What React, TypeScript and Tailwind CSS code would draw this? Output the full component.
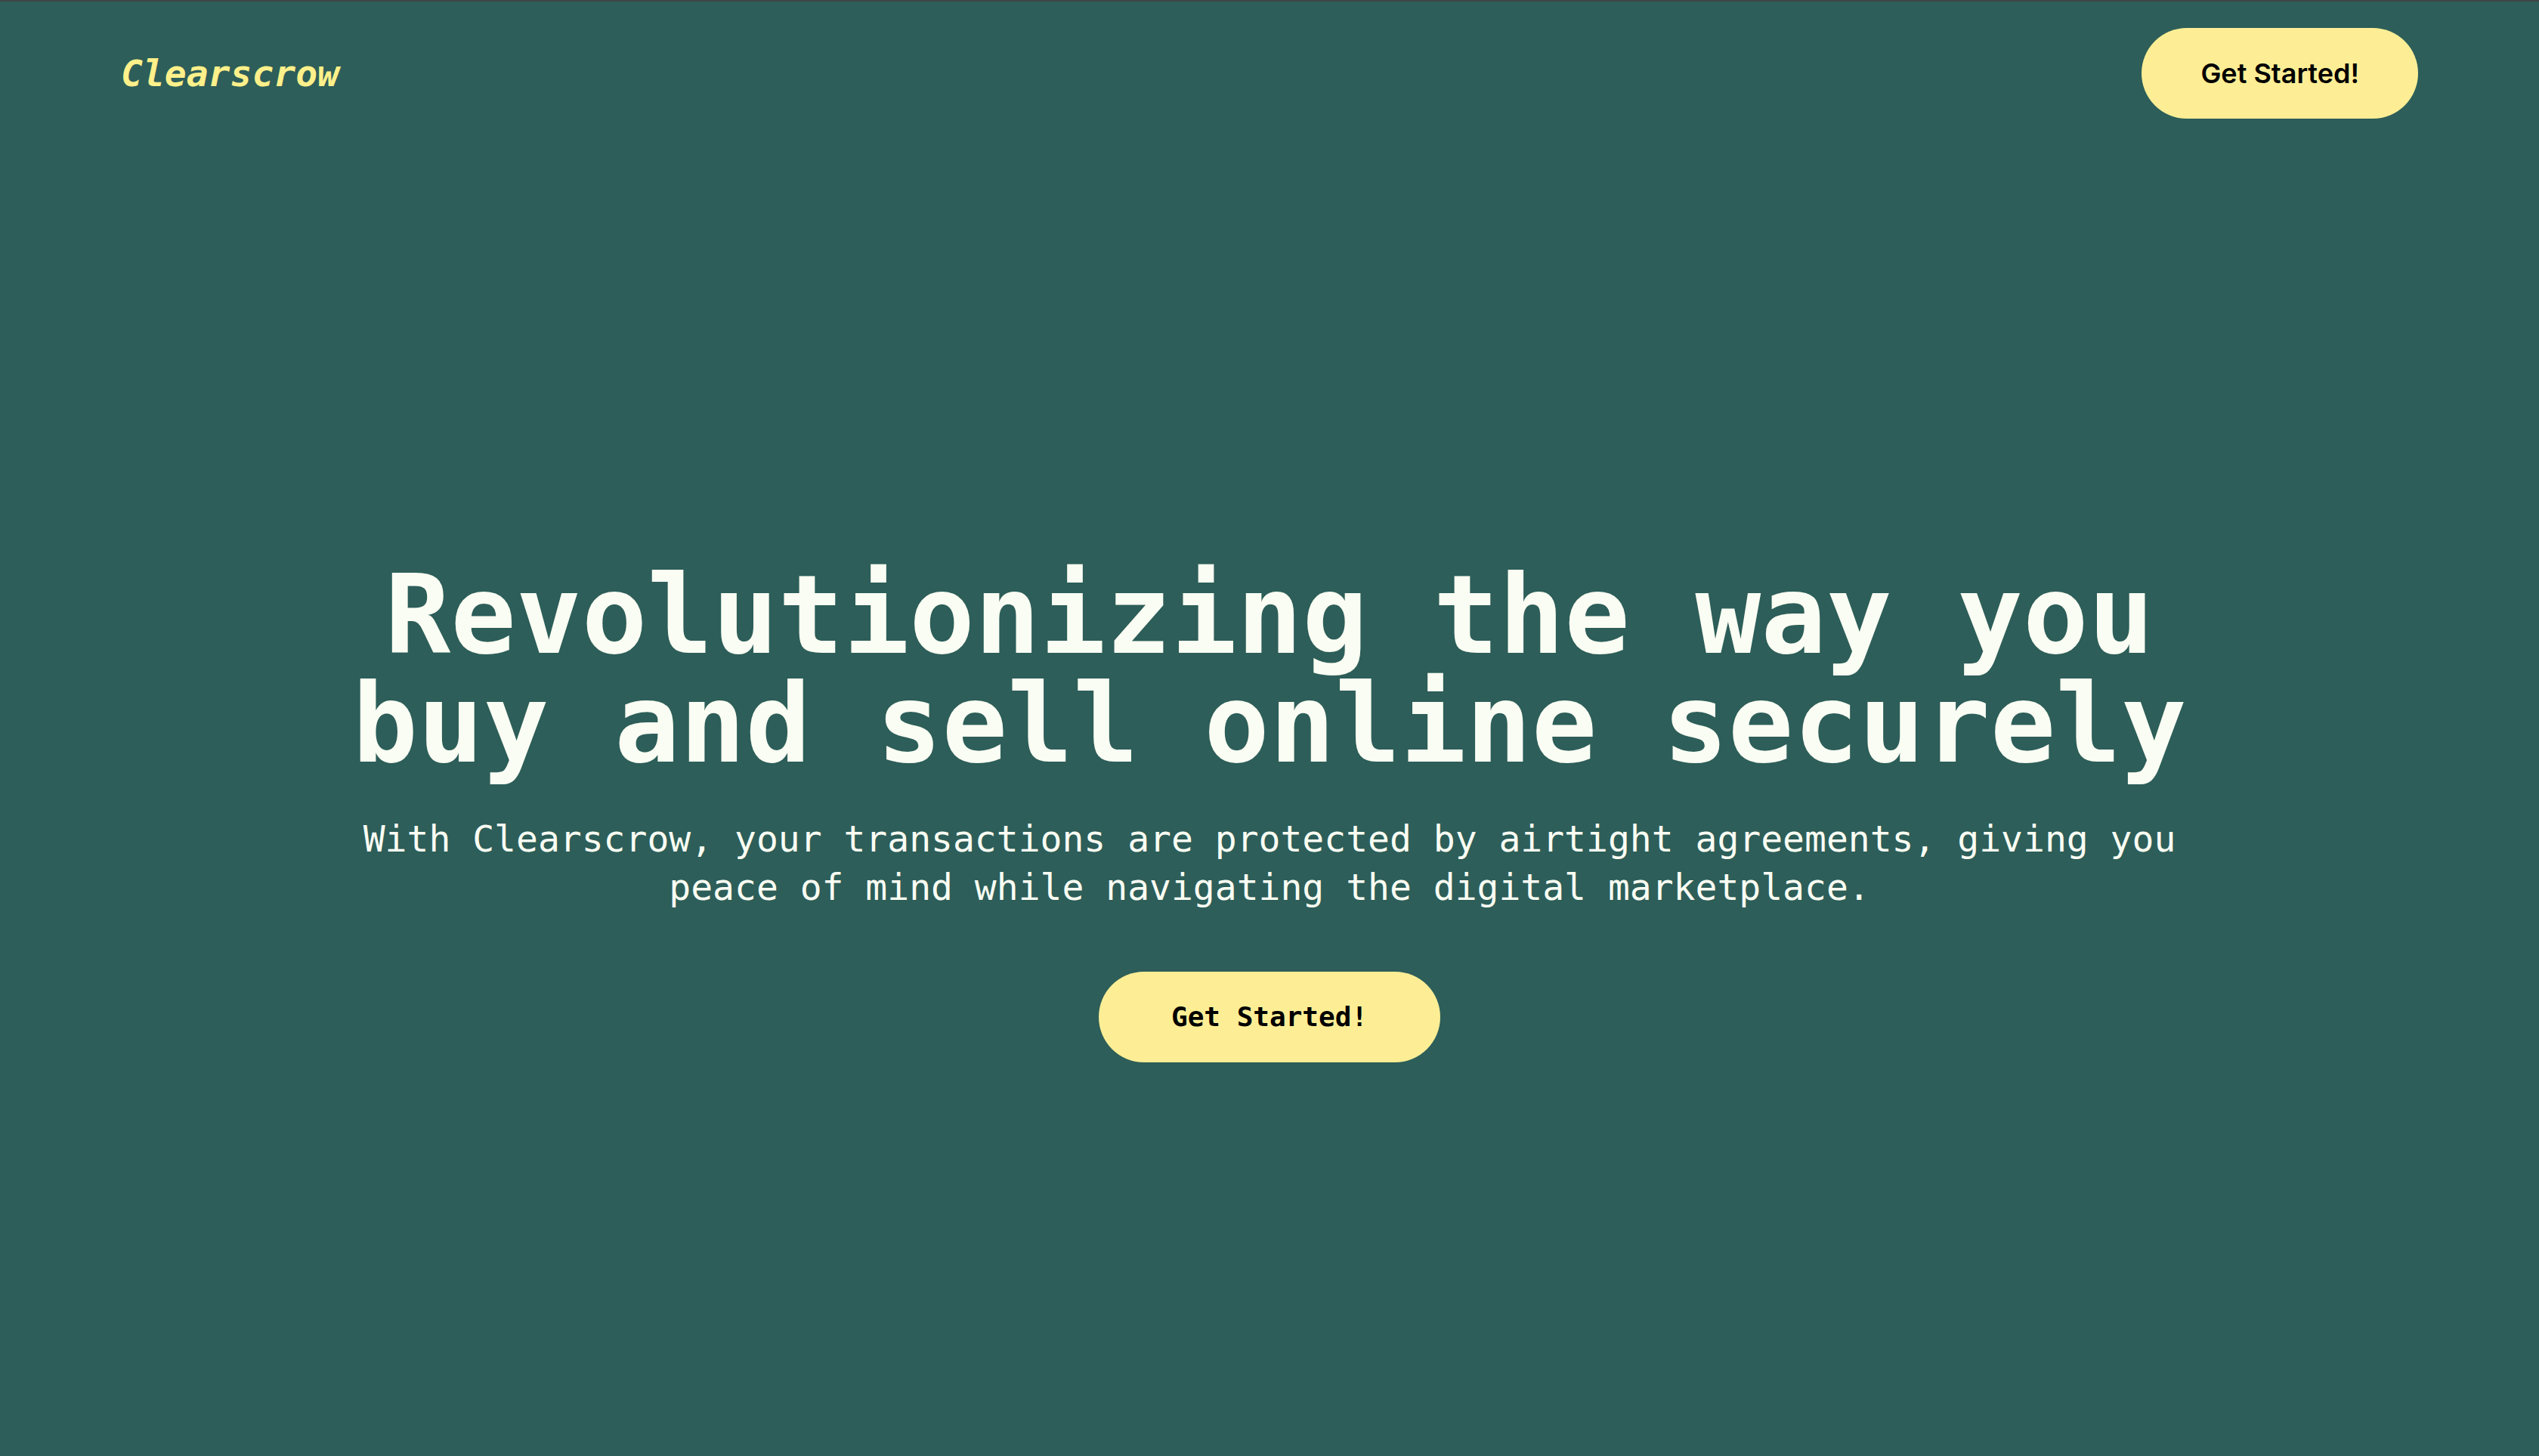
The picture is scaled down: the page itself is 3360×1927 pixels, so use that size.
const MONO = "font-['DejaVu_Sans_Mono','Liberation_Mono',monospace]";

function Header() {
  return (
    <header className="flex items-center justify-between px-[160px] pt-[35px]">
      <a className={`${MONO} text-[48px] font-bold italic leading-none text-[#fef08a]`}>
        Clearscrow
      </a>
      <button className="rounded-full bg-[#fdee95] px-[78px] py-[32px] font-['Inter',sans-serif] text-[36px] font-semibold leading-[56px] text-black">
        Get Started!
      </button>
    </header>
  );
}

function Hero() {
  return (
    <main className="flex flex-1 flex-col items-center justify-center pt-[64px] text-center">
      <div className="flex max-w-[2560px] flex-col items-center">
        <h1 className={`${MONO} text-[144px] font-bold leading-none text-[#fafdf3]`}>
          Revolutionizing the way you buy and sell online securely
        </h1>
        <p className={`${MONO} mt-[48px] text-[48px] leading-[64px] text-[#fafdf3]`}>
          With Clearscrow, your transactions are protected by airtight agreements, giving you
          peace of mind while navigating the digital marketplace.
        </p>
        <button
          className={`${MONO} mt-[80px] rounded-full bg-[#fdee95] px-[96px] py-[32px] text-[36px] font-bold leading-[56px] text-black`}
        >
          Get Started!
        </button>
      </div>
    </main>
  );
}

export default function App() {
  return (
    <div className="flex min-h-screen flex-col border-t-2 border-[#3e4443] bg-[#2d5e59]">
      <Header />
      <Hero />
    </div>
  );
}
